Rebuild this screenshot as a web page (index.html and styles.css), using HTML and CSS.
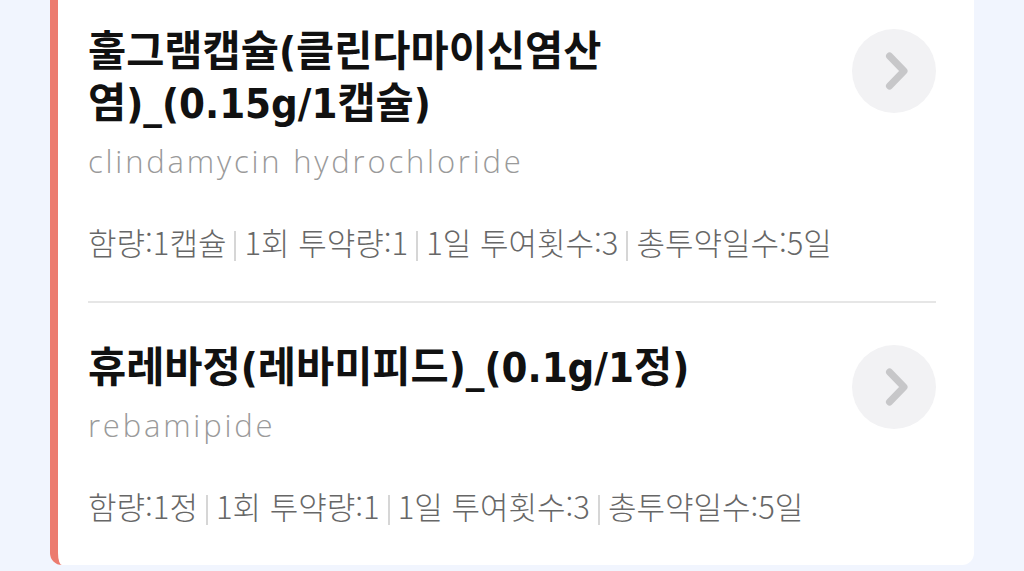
FILE: index.html
```html
<!DOCTYPE html>
<html lang="ko">
<head>
<meta charset="utf-8">
<title>처방 약품</title>
<link rel="stylesheet" href="styles.css">
</head>
<body>
<div class="page">
  <section class="card">
    <div class="item">
      <div class="text">
        <h2 class="title">훌그램캡슐(클린다마이신염산염)_(0.15g/1캡슐)</h2>
        <p class="sub">clindamycin hydrochloride</p>
        <p class="info">함량:1캡슐<span class="sep"></span>1회 투약량:1<span class="sep"></span>1일 투여횟수:3<span class="sep"></span>총투약일수:5일</p>
      </div>
      <button class="more" type="button" aria-label="상세보기">
        <svg width="84" height="84" viewBox="0 0 84 84"><polyline points="37.5,27 52,42 37.5,57" fill="none" stroke="#c7c7c9" stroke-width="7" stroke-linecap="round" stroke-linejoin="round"/></svg>
      </button>
    </div>
    <div class="item">
      <div class="text">
        <h2 class="title">휴레바정(레바미피드)_(0.1g/1정)</h2>
        <p class="sub">rebamipide</p>
        <p class="info">함량:1정<span class="sep"></span>1회 투약량:1<span class="sep"></span>1일 투여횟수:3<span class="sep"></span>총투약일수:5일</p>
      </div>
      <button class="more" type="button" aria-label="상세보기">
        <svg width="84" height="84" viewBox="0 0 84 84"><polyline points="37.5,27 52,42 37.5,57" fill="none" stroke="#c7c7c9" stroke-width="7" stroke-linecap="round" stroke-linejoin="round"/></svg>
      </button>
    </div>
  </section>
</div>
</body>
</html>
```
FILE: styles.css
```css
html, body {
  margin: 0;
  padding: 0;
  background: #f1f5fe;
}
body {
  font-family: "Noto Sans CJK KR", "Noto Sans", sans-serif;
  overflow: hidden;
}
.page {
  padding: 0 50px;
}
.card {
  margin-top: -13px;
  background: #ffffff;
  border-left: 8px solid #ec7b6f;
  border-radius: 0 0 12px 12px;
  padding: 0 38px 0 30px;
}
.item {
  display: flex;
  align-items: flex-start;
  gap: 20px;
  padding: 39px 0;
  border-bottom: 2px solid #e6e6e6;
}
.item:last-child {
  border-bottom: none;
}
.text {
  flex: 1;
  min-width: 0;
}
.title {
  margin: 0;
  font-family: "DejaVu Sans", "Noto Sans CJK KR", sans-serif;
  font-stretch: condensed;
  font-size: 41.5px;
  line-height: 52px;
  font-weight: 700;
  color: #111111;
}
.sub {
  margin: 11px 0 0;
  font-family: "Open Sans", "Noto Sans", sans-serif;
  font-weight: 300;
  font-size: 31px;
  letter-spacing: 2.8px;
  line-height: 40px;
  color: #9a9a9a;
}
.info {
  margin: 41px 0 0;
  font-size: 31px;
  line-height: 40px;
  font-weight: 300;
  color: #676767;
  white-space: nowrap;
}
.sep {
  display: inline-block;
  width: 2px;
  height: 30px;
  margin: 0 8px;
  background: #d6d6d6;
  vertical-align: -6px;
}
.more {
  flex: none;
  width: 84px;
  height: 84px;
  margin-top: 3px;
  padding: 0;
  border: none;
  border-radius: 50%;
  background: #f2f2f4;
  display: flex;
  align-items: center;
  justify-content: center;
}
.more svg {
  display: block;
}
```
